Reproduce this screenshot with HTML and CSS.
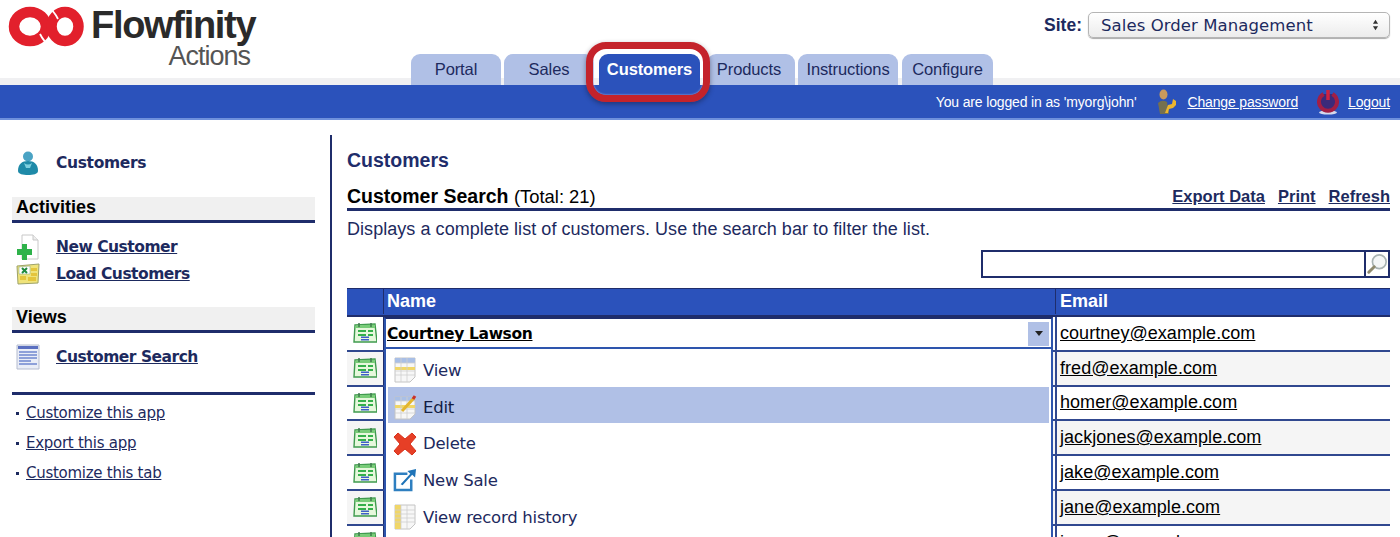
FILE: index.html
```html
<!DOCTYPE html>
<html lang="en">
<head>
<meta charset="utf-8">
<title>Flowfinity Actions</title>
<link rel="stylesheet" href="styles.css">
</head>
<body>
<header class="top">
  <div class="logo">
    <svg class="rings" viewBox="6 5 80 44" width="80" height="44">
      <ellipse cx="30" cy="26.500" rx="16" ry="14.500" fill="none" stroke="#e2202c" stroke-width="10.500"/>
      <ellipse cx="65" cy="26.500" rx="13.500" ry="14.500" fill="none" stroke="#e2202c" stroke-width="10.500"/>
      <path d="M48 7Q54 11 58 19" fill="none" stroke="#fff" stroke-width="1.800"/>
      <path d="M50 46Q44 42 40 34" fill="none" stroke="#fff" stroke-width="1.800"/>
    </svg>
    <div class="wordmark">
      <div class="brand">Flowfinity</div>
      <div class="product">Actions</div>
    </div>
  </div>
  <nav class="tabs">
    <a class="tab t-portal">Portal</a>
    <a class="tab t-sales">Sales</a>
    <a class="tab t-customers active">Customers</a>
    <a class="tab t-products">Products</a>
    <a class="tab t-instructions">Instructions</a>
    <a class="tab t-configure">Configure</a>
  </nav>
  <div class="site">
    <span class="site-label">Site:</span>
    <div class="site-select">
      <span>Sales Order Management</span>
      <svg viewBox="0 0 8 14" width="7" height="12"><path d="M4 1 7 5.500H1zM4 13 1 8.500H7z" fill="#333"/></svg>
    </div>
  </div>
</header>
<div class="bluebar">
  <span class="logged">You are logged in as 'myorg\john'</span>
  <svg class="bar-ico key" viewBox="0 0 20 26" width="20" height="26">
    <ellipse cx="6.500" cy="5.500" rx="4" ry="5" fill="#c99a5c"/>
    <path d="M1 14q4-4 9-1l2 12H3z" fill="#75704f"/>
    <path d="M8 24l3-8 4-1 1-5 3 2v4l-3 3-4 1-1 4z" fill="#ecb52e"/>
  </svg>
  <a class="bar-link">Change password</a>
  <svg class="bar-ico power" viewBox="0 0 22 26" width="22" height="26">
    <ellipse cx="11" cy="23.500" rx="9" ry="2" fill="#d5d9ec"/>
    <path d="M6.500 5a9 9 0 1 0 9 0" fill="#3b2a7a" stroke="#a21f45" stroke-width="4"/>
    <path d="M11 1v10" stroke="#cf2340" stroke-width="3.500"/>
  </svg>
  <a class="bar-link">Logout</a>
</div>

<div class="layout">
  <aside class="side">
    <div class="side-title">
      <svg class="side-ico" viewBox="0 0 24 26" width="24" height="26">
        <circle cx="12" cy="6.500" r="5" fill="#4aa3c4"/>
        <path d="M2 21c0-7 4-10 10-10s10 3 10 10c0 3-5 4-10 4S2 24 2 21z" fill="#1f8aa8"/>
        <path d="M8 13q4 3 8 0l-2 5h-4z" fill="#7fd0e0"/>
      </svg>
      <span>Customers</span>
    </div>
    <h3 class="side-head">Activities</h3>
    <ul class="side-list activities">
      <li>
        <svg class="side-ico" viewBox="0 0 24 26" width="24" height="26">
          <path d="M6 1h11l5 5v19H6z" fill="#fff" stroke="#c8c8c8"/>
          <path d="M17 1v5h5" fill="#eee" stroke="#c8c8c8"/>
          <path d="M6 10h5v5h5v6h-5v5H6v-5H1v-6h5z" fill="#2eb24a"/>
        </svg>
        <a>New Customer</a>
      </li>
      <li>
        <svg class="side-ico" viewBox="0 0 24 22" width="24" height="22">
          <path d="M1 3 23 1l-1 19-20 1z" fill="#efe37a" stroke="#9ea36a"/>
          <path d="M3 4 14 3v8H3z" fill="#fff" stroke="#8fb08a" stroke-width=".6"/>
          <path d="M6 5l5 5M11 5l-5 5" stroke="#1d8a3c" stroke-width="2"/>
          <path d="M15 5h6v3h-6zM15 10h6v3h-6zM4 13h6v4H4zM12 14h8v4h-8z" fill="#e4c53c"/>
        </svg>
        <a>Load Customers</a>
      </li>
    </ul>
    <h3 class="side-head">Views</h3>
    <ul class="side-list views">
      <li>
        <svg class="side-ico" viewBox="0 0 24 26" width="24" height="26">
          <path d="M1 1h22v24H1z" fill="#e9edf7" stroke="#b5bccf"/>
          <path d="M2 2h20v3H2z" fill="#5a6fc0"/>
          <path d="M3 8h18M3 11h18M3 14h18M3 17h12M3 20h18" stroke="#6f86cf" stroke-width="1.500"/>
        </svg>
        <a>Customer Search</a>
      </li>
    </ul>
    <ul class="side-foot">
      <li><a>Customize this app</a></li>
      <li><a>Export this app</a></li>
      <li><a>Customize this tab</a></li>
    </ul>
  </aside>

  <main class="content">
    <h1 class="page-title">Customers</h1>
    <div class="view-head">
      <h2 class="view-title">Customer Search <span>(Total: 21)</span></h2>
      <div class="view-actions"><a>Export Data</a><a>Print</a><a>Refresh</a></div>
    </div>
    <p class="desc">Displays a complete list of customers. Use the search bar to filter the list.</p>
    <div class="search-row">
      <div class="search">
        <div class="search-input"></div>
        <button class="search-btn" aria-label="Search">
          <svg viewBox="0 0 24 24" width="22" height="22">
            <circle cx="14.500" cy="9.500" r="7.500" fill="#f4f6f6" stroke="#a9b3b3" stroke-width="1.800"/>
            <path d="M9 15 3 21" stroke="#8f8a6e" stroke-width="3.200" stroke-linecap="round"/>
          </svg>
        </button>
      </div>
    </div>

    <div class="grid">
      <div class="grid-head">
        <div class="c-ico"></div>
        <div class="c-name">Name</div>
        <div class="c-email">Email</div>
      </div>
      <div class="row first">
        <div class="c-ico"><svg class="rec"><use href="#rec"/></svg></div>
        <div class="c-name"></div>
        <div class="c-email"><a>courtney@example.com</a></div>
      </div>
      <div class="row alt">
        <div class="c-ico"><svg class="rec"><use href="#rec"/></svg></div>
        <div class="c-name"></div>
        <div class="c-email"><a>fred@example.com</a></div>
      </div>
      <div class="row">
        <div class="c-ico"><svg class="rec"><use href="#rec"/></svg></div>
        <div class="c-name"></div>
        <div class="c-email"><a>homer@example.com</a></div>
      </div>
      <div class="row alt">
        <div class="c-ico"><svg class="rec"><use href="#rec"/></svg></div>
        <div class="c-name"></div>
        <div class="c-email"><a>jackjones@example.com</a></div>
      </div>
      <div class="row">
        <div class="c-ico"><svg class="rec"><use href="#rec"/></svg></div>
        <div class="c-name"></div>
        <div class="c-email"><a>jake@example.com</a></div>
      </div>
      <div class="row alt">
        <div class="c-ico"><svg class="rec"><use href="#rec"/></svg></div>
        <div class="c-name"></div>
        <div class="c-email"><a>jane@example.com</a></div>
      </div>
      <div class="row">
        <div class="c-ico"><svg class="rec"><use href="#rec"/></svg></div>
        <div class="c-name"></div>
        <div class="c-email"><a>jason@example.com</a></div>
      </div>

      <div class="menu">
        <div class="menu-head">
          <a>Courtney Lawson</a>
          <span class="menu-arrow"><svg viewBox="0 0 8 5" width="8" height="5"><path d="M0 0h8L4 5z" fill="#222"/></svg></span>
        </div>
        <ul class="menu-list">
          <li>
            <svg class="m-ico" viewBox="0 0 24 26" width="24" height="26">
              <path d="M2 1h20v19l-5 5H2z" fill="#f7f7f7" stroke="#c4c4c4"/>
              <path d="M2 1h20v5H2z" fill="#a9bfe6"/>
              <path d="M2 10h20v3H2z" fill="#f0d668"/>
              <path d="M2 6h20M2 14h20M2 18h20M8 1v24M14 1v24" stroke="#cfcfcf" stroke-width=".8"/>
            </svg>
            View
          </li>
          <li class="hot">
            <svg class="m-ico" viewBox="0 0 24 26" width="24" height="26">
              <path d="M2 3h20v17l-5 5H2z" fill="#f7f7f7" stroke="#c4c4c4"/>
              <path d="M2 3h20v4H2z" fill="#a9bfe6"/>
              <path d="M2 11h20v3H2z" fill="#f0d668"/>
              <path d="M2 7h20M2 15h20M2 19h20M8 3v22M14 3v22" stroke="#cfcfcf" stroke-width=".8"/>
              <path d="M9 17 21 4" stroke="#e3b52e" stroke-width="3"/>
              <path d="M20 5l2-3" stroke="#c8322c" stroke-width="3"/>
            </svg>
            Edit
          </li>
          <li>
            <svg class="m-ico" viewBox="0 0 24 24" width="24" height="24">
              <path d="M5 1l7 6 7-6 4 4-6 7 6 7-4 4-7-6-7 6-4-4 6-7-6-7z" fill="#e63f26" stroke="#d8331d" stroke-linejoin="round"/>
            </svg>
            Delete
          </li>
          <li>
            <svg class="m-ico" viewBox="0 0 25 25" width="24" height="24">
              <path d="M15 6H2v17h17V12" fill="#fff" stroke="#2e7fc0" stroke-width="2.600"/>
              <path d="M8 17 18 6l-3-3 9-2-1 9-3-3-10 11z" fill="#1f74b8"/>
            </svg>
            New Sale
          </li>
          <li>
            <svg class="m-ico" viewBox="0 0 24 26" width="24" height="26">
              <path d="M2 1h20v19l-5 5H2z" fill="#f7f7f7" stroke="#c4c4c4"/>
              <path d="M2 1h6v24H2z" fill="#f0d668"/>
              <path d="M2 6h20M2 10h20M2 14h20M2 18h20M8 1v24M14 1v24" stroke="#cfcfcf" stroke-width=".8"/>
            </svg>
            View record history
          </li>
        </ul>
      </div>
    </div>
  </main>
</div>

<svg class="defs" width="0" height="0">
  <symbol id="rec" viewBox="0 0 24 22">
    <path d="M2 3 22 2l2 18H1z" fill="#e6f8dc" stroke="#3f9a4e" stroke-width="1.400"/>
    <path d="M2.500 3.500 21.500 2.600 22 6H2.200z" fill="#77cc77"/>
    <path d="M5 8h8v2H5zM15 8h5v2h-5zM5 12h8v2H5zM15 12h5v2h-5z" fill="#35b04a"/>
    <path d="M8 14.500h8v1.500H8zM8 17h8v1.500H8z" fill="#3f5fc8"/>
    <path d="M6 1v4M18 1v4" stroke="#3f7a4e" stroke-width="1.500"/>
  </symbol>
</svg>
</body>
</html>
```

FILE: styles.css
```css
* { box-sizing: border-box; }
html, body { margin: 0; padding: 0; height: 537px; overflow: hidden; background: #fff; }
body { font-family: "Liberation Sans", Arial, sans-serif; color: #1d2a5e; }
a { color: inherit; }
ul { list-style: none; margin: 0; padding: 0; }
h1, h2, h3, p { margin: 0; }

.top {
  position: relative;
  display: flex;
  height: 85px;
  background: linear-gradient(#fff 0 78px, #f0f0f2 78px);
}
.logo { width: 411px; display: flex; align-items: flex-start; padding: 5px 0 0 6px; }
.rings { flex: none; }
.wordmark { margin-left: 5px; text-align: right; width: 163px; color: #2a2a2a; }
.brand { font-size: 38px; font-weight: 700; letter-spacing: -1.300px; line-height: 36px; margin-top: 2px; white-space: nowrap; }
.product { font-size: 27px; letter-spacing: -1px; line-height: 27px; color: #555; padding-right: 4px; }

.tabs { display: flex; align-self: flex-end; height: 31px; }
.tab {
  display: flex; align-items: center; justify-content: center;
  height: 31px; font-size: 16.500px; color: #1d2a5e; background: #b0c0e6;
  border-radius: 9px 9px 0 0; letter-spacing: -.1px;
}
.t-portal { width: 90px; margin-right: 3px; }
.t-sales { width: 90px; margin-right: 5px; }
.t-customers { width: 101px; margin-right: 7px; }
.t-products { width: 88px; margin-right: 3px; padding-right: 4px; }
.t-instructions { width: 100px; margin-right: 4px; }
.t-configure { width: 91px; }
.tab.active { position: relative; background: #2b52bb; color: #fff; font-weight: 700; height: 45px; margin-bottom: -14px; align-items: flex-start; padding-top: 6px; border-radius: 9px; }
.tab.active::after {
  content: ""; position: absolute; left: -13px; right: -10px; top: -12px; bottom: -3px;
  border: 7px solid #c4232b; border-radius: 20px;
  box-shadow: 0 2px 5px rgba(20, 20, 40, .45), inset 0 0 2px rgba(255, 255, 255, .7);
}

.site { display: flex; align-items: center; gap: 6px; height: 26px; margin: 12px 10px 0 auto; }
.site-label { font-size: 17.500px; font-weight: 700; color: #1d2a5e; }
.site-select {
  width: 302px; height: 26px; display: flex; align-items: center; justify-content: space-between;
  padding: 0 10px 0 12px; border: 1px solid #b5b5b5; border-radius: 5px;
  background: linear-gradient(#fff, #ececec); box-shadow: 0 1px 1px #aaa;
  font: 16.500px "DejaVu Sans", sans-serif; letter-spacing: .08px; color: #1d2a5e;
}

.bluebar {
  height: 35px; display: flex; align-items: center; justify-content: flex-end;
  padding: 1px 10px 0 0; background: #2b52bb; border-bottom: 2px solid #6e90dc;
  color: #fff; font-size: 14px; letter-spacing: -.15px;
}
.logged { margin-right: 21px; }
.bar-ico { flex: none; }
.key { margin-right: 10px; }
.power { margin: 0 9px 0 19px; }
.bar-link { text-decoration: underline; }

.layout { display: flex; padding-top: 15px; }
.side { width: 332px; height: 402px; padding: 16px 15px 0 12px; border-right: 2px solid #1f2d6b; flex: none; }
.side-title { display: flex; align-items: center; height: 24px; padding-left: 4px; gap: 16px; font: 700 15.500px "DejaVu Sans", sans-serif; letter-spacing: -.35px; }
.side-head {
  margin-top: 22px; height: 26px; padding: 0 4px; background: #f0f0f0; border-bottom: 3px solid #1f2d6b;
  font-size: 18px; font-weight: 700; line-height: 21px; color: #000;
}
.side-list li { display: flex; align-items: center; gap: 16px; height: 27px; padding-left: 4px; font: 700 15.500px "DejaVu Sans", sans-serif; letter-spacing: -.5px; }
.side-list a { text-decoration: underline; }
.activities { padding-top: 10px; }
.views { padding-top: 10px; }
.activities + .side-head { margin-top: 20px; }
.side-foot { margin-top: 22px; padding-top: 3px; border-top: 3px solid #1f2d6b; font: 15px "DejaVu Sans", sans-serif; letter-spacing: -.27px; }
.side-foot li { height: 30px; display: flex; align-items: center; gap: 7px; padding-left: 4px; }
.side-foot li::before { content: ""; width: 3px; height: 3px; background: #1d2a5e; }
.side-foot a { text-decoration: underline; }

.content { flex: 1; padding: 15px 10px 0 15px; min-width: 0; }
.page-title { font-size: 19.500px; font-weight: 700; line-height: 20px; color: #1f2d6b; }
.view-head { margin-top: 16px; height: 25px; display: flex; justify-content: space-between; align-items: flex-start; border-bottom: 3px solid #1f2d6b; }
.view-title { font-size: 19.500px; font-weight: 700; line-height: 20px; color: #000; }
.view-title span { font-weight: 400; font-size: 18.400px; }
.view-actions { display: flex; gap: 13px; font-size: 16.500px; font-weight: 700; line-height: 20px; }
.view-actions a { text-decoration: underline; }
.desc { margin-top: 8px; font-size: 18px; letter-spacing: .05px; line-height: 20px; }
.search-row { display: flex; justify-content: flex-end; margin-top: 11px; }
.search { display: flex; width: 409px; height: 28px; border: 2px solid #1f2d6b; }
.search-input { flex: 1; background: #fff; }
.search-btn { width: 24px; padding: 0; border: 0; border-left: 2px solid #1f2d6b; background: #fff; display: flex; align-items: center; justify-content: center; }

.grid { position: relative; margin-top: 10px; }
.grid-head, .row { display: grid; grid-template-columns: 36px 672px 1fr; }
.grid-head { height: 29px; padding-bottom: 1px; background: #2b52bb; color: #fff; font-size: 18px; font-weight: 700; border-top: 1px solid #1f2d6b; border-bottom: 2px solid #1f2d6b; }
.grid-head > div { display: flex; align-items: center; padding-left: 3px; }
.grid-head .c-name { border-left: 1px solid #1f2d6b; }
.grid-head .c-email { border-left: 1px solid #1f2d6b; padding-left: 4px; }
.row { height: 34.800px; border-bottom: 2px solid #30488f; font-size: 18px; letter-spacing: .05px; color: #000; }
.row.alt { background: #f5f5f5; }
.row .c-ico { display: flex; align-items: center; justify-content: center; }
.row .c-name { border-left: 2px solid #1f2d6b; }
.row .c-email { display: flex; align-items: center; padding-left: 3px; border-left: 2px solid #30488f; }
.row .c-email a { text-decoration: underline; }
.rec { width: 24px; height: 22px; }
.defs { position: absolute; }

.menu { position: absolute; left: 37px; top: 29px; width: 669px; background: #fff; border: 2px solid #2e55ad; border-top: 2px solid #1f2d6b; }
.menu-head { display: flex; align-items: center; justify-content: space-between; height: 30px; padding: 1px 2px 0 1px; border-bottom: 2px solid #2e55ad; font: 700 15.500px "DejaVu Sans", sans-serif; letter-spacing: -.35px; color: #000; }
.menu-head a { text-decoration: underline; }
.menu-arrow { width: 21px; height: 24px; background: #b0c0e6; display: flex; align-items: center; justify-content: center; }
.menu-list { padding: 1px 2px 3px 2px; height: 190px; }
.menu-list li { display: flex; align-items: center; gap: 6px; height: 36.700px; padding: 4px 0 0 5px; font: 16.500px "DejaVu Sans", sans-serif; letter-spacing: -.25px; color: #1d2a5e; }
.menu-list .hot { background: #b0c0e6; color: #111c44; }
.m-ico { flex: none; }
```
